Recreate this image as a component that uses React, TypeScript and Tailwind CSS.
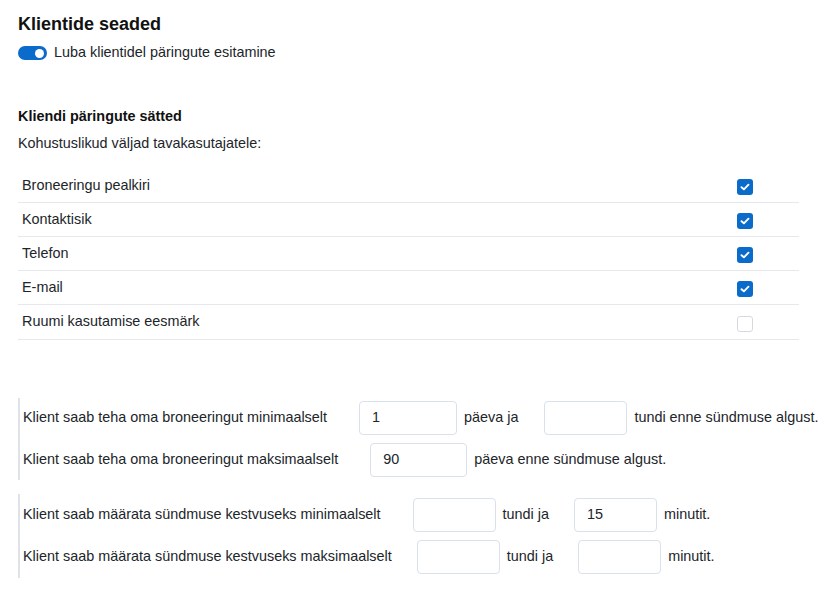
import React from "react";

const font = { fontFamily: '"Liberation Sans", Arial, sans-serif' };

function Check({ on }: { on: boolean }) {
  if (on)
    return (
      <div className="w-[16px] h-[16px] rounded-[3px] bg-[#0b6bcb] flex items-center justify-center">
        <svg width="10" height="8" viewBox="0 0 10 8" fill="none">
          <path d="M1.5 4.2 L3.9 6.3 L8.5 1.7" stroke="white" strokeWidth="1.9" strokeLinecap="round" strokeLinejoin="round" />
        </svg>
      </div>
    );
  return <div className="w-[16px] h-[16px] rounded-[3px] border-[1.5px] border-[#d5d9df] bg-white" />;
}

function Field({ value, w, ml }: { value?: string; w: string; ml: string }) {
  return (
    <div
      className={`${w} ${ml} h-[34px] shrink-0 rounded-[4px] border border-[#d9e1ec] bg-white flex items-center pl-[12px] text-[14.4px] text-[#212529]`}
    >
      {value}
    </div>
  );
}

function T({ children, ml }: { children: React.ReactNode; ml?: string }) {
  return <span className={`${ml ?? ""} whitespace-nowrap shrink-0`}>{children}</span>;
}

export default function App() {
  const rows: [string, boolean][] = [
    ["Broneeringu pealkiri", true],
    ["Kontaktisik", true],
    ["Telefon", true],
    ["E-mail", true],
    ["Ruumi kasutamise eesmärk", false],
  ];
  return (
    <div style={font} className="bg-white text-[#212529] w-[836px] h-[602px] px-[18px] pt-[13px] overflow-hidden">
      <h1 className="text-[18px] font-bold leading-[22px] text-[#111]">Klientide seaded</h1>
      <div className="mt-[8px] h-[20px] flex items-center">
        <div className="w-[29px] h-[14px] rounded-full bg-[#0b6bcb] flex items-center justify-end pr-[3px]">
          <div className="w-[9px] h-[9px] rounded-full bg-white" />
        </div>
        <span className="ml-[7px] text-[14.4px]">Luba klientidel päringute esitamine</span>
      </div>

      <div className="mt-[43px] text-[14.4px] font-bold leading-[20px] text-[#111]">Kliendi päringute sätted</div>
      <div className="mt-[7px] text-[14.4px] leading-[20px]">Kohustuslikud väljad tavakasutajatele:</div>

      <div className="mt-[16px] w-[781px]">
        {rows.map(([label, on], i) => (
          <div key={label} className={`${i === 4 ? "h-[35px]" : "h-[34px]"} flex items-center border-b border-[#e6e8eb]`}>
            <div className="flex-1 pl-[4px] text-[14.4px]">{label}</div>
            <div className="w-[108px] flex justify-center pt-[3px]">
              <Check on={on} />
            </div>
          </div>
        ))}
      </div>

      <div className="mt-[58px] border-l-2 border-[#dfe3e8] pl-[3px] py-[3px] flex flex-col gap-[8px] text-[14.4px]">
        <div className="h-[34px] flex items-center">
          <T>Klient saab teha oma broneeringut minimaalselt</T>
          <Field value="1" w="w-[98px]" ml="ml-[32px]" />
          <T ml="ml-[7px]">päeva ja</T>
          <Field w="w-[83px]" ml="ml-[26px]" />
          <T ml="ml-[7px]">tundi enne sündmuse algust.</T>
        </div>
        <div className="h-[34px] flex items-center">
          <T>Klient saab teha oma broneeringut maksimaalselt</T>
          <Field value="90" w="w-[97px]" ml="ml-[32px]" />
          <T ml="ml-[7px]">päeva enne sündmuse algust.</T>
        </div>
      </div>

      <div className="mt-[14px] border-l-2 border-[#dfe3e8] pl-[3px] py-[4px] flex flex-col gap-[8px] text-[14.4px]">
        <div className="h-[34px] flex items-center">
          <T>Klient saab määrata sündmuse kestvuseks minimaalselt</T>
          <Field w="w-[83px]" ml="ml-[32px]" />
          <T ml="ml-[7px]">tundi ja</T>
          <Field value="15" w="w-[83px]" ml="ml-[25px]" />
          <T ml="ml-[7px]">minutit.</T>
        </div>
        <div className="h-[34px] flex items-center">
          <T>Klient saab määrata sündmuse kestvuseks maksimaalselt</T>
          <Field w="w-[83px]" ml="ml-[25px]" />
          <T ml="ml-[7px]">tundi ja</T>
          <Field w="w-[83px]" ml="ml-[25px]" />
          <T ml="ml-[7px]">minutit.</T>
        </div>
      </div>
    </div>
  );
}
